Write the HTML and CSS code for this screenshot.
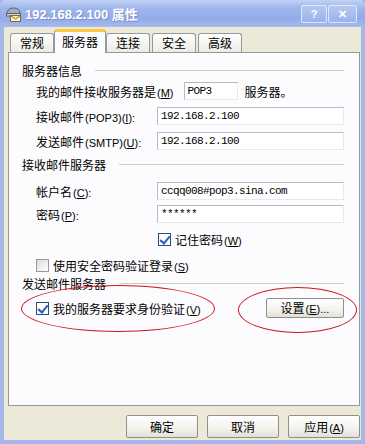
FILE: index.html
```html
<!DOCTYPE html>
<html lang="zh-CN">
<head>
    <meta charset="UTF-8">
    <title>192.168.2.100 属性</title>
    <link rel="stylesheet" href="styles.css">
</head>
<body>
    <div class="window">
        <div class="titlebar">
            <svg class="app-icon" width="17" height="17" viewBox="0 0 17 17">
                <path d="M2 8 Q2 2 8.5 2 Q15 2 15 8 Z" fill="#a7aeb6" stroke="#56616c"/>
                <rect x="1.5" y="7.5" width="14" height="2.5" fill="#d4d9de" stroke="#56616c"/>
                <rect x="5.5" y="9.5" width="10" height="6" fill="#fbf1c0" stroke="#8a6d2e"/>
                <path d="M5.5 9.5 L10.5 13 L15.5 9.5" fill="none" stroke="#8a6d2e"/>
            </svg>
            <span class="title">192.168.2.100 属性</span>
            <div class="caption-buttons">
                <span class="cap-btn">?</span>
                <span class="cap-btn close">✕</span>
            </div>
        </div>

        <div class="client">
            <div class="tabs">
                <span class="tab">常规</span>
                <span class="tab active">服务器</span>
                <span class="tab">连接</span>
                <span class="tab">安全</span>
                <span class="tab">高级</span>
            </div>

            <div class="panel">
                <div class="group-title"><span>服务器信息</span><i></i></div>
                <div class="row row-type">
                    <span>我的邮件接收服务器是<span class="key">(<u>M</u>)</span></span>
                    <span class="field small">POP3</span>
                    <span>服务器。</span>
                </div>
                <div class="row row-input gap7">
                    <span class="label">接收邮件<span class="key">(POP3)(<u>I</u>):</span></span>
                    <span class="field">192.168.2.100</span>
                </div>
                <div class="row row-input gap7">
                    <span class="label">发送邮件<span class="key">(SMTP)(<u>U</u>):</span></span>
                    <span class="field">192.168.2.100</span>
                </div>

                <div class="group-title g2"><span>接收邮件服务器</span><i></i></div>
                <div class="row row-input gap10">
                    <span class="label">帐户名<span class="key">(<u>C</u>):</span></span>
                    <span class="field">ccqq008#pop3.sina.com</span>
                </div>
                <div class="row row-input gap5">
                    <span class="label">密码<span class="key">(<u>P</u>):</span></span>
                    <span class="field">******</span>
                </div>
                <div class="row check-row remember">
                    <span class="check on"></span>
                    <span>记住密码<span class="key">(<u>W</u>)</span></span>
                </div>
                <div class="row check-row spa">
                    <span class="check"></span>
                    <span>使用安全密码验证登录<span class="key">(<u>S</u>)</span></span>
                </div>

                <div class="group-title g3"><span>发送邮件服务器</span><i></i></div>
                <div class="row auth-row">
                    <span class="check on"></span>
                    <span class="auth-text">我的服务器要求身份验证<span class="key">(<u>V</u>)</span></span>
                    <span class="btn settings">设置<span class="key">(<u>E</u>)...</span></span>
                </div>

                <span class="mark mark-left"></span>
                <span class="mark mark-right"></span>
            </div>

            <div class="actions">
                <span class="btn">确定</span>
                <span class="btn">取消</span>
                <span class="btn">应用<span class="key">(<u>A</u>)</span></span>
            </div>
        </div>
    </div>
</body>
</html>
```

FILE: styles.css
```css
body {
    margin: 0;
    font-family: "Noto Sans CJK SC", "Liberation Sans", sans-serif;
    font-size: 12px;
    color: #000;
}
.window {
    width: 365px;
    height: 444px;
    box-sizing: border-box;
    background: #ece9d8;
    border: 4px solid #a3b8e9;
    border-top: none;
    display: flex;
    flex-direction: column;
}
.titlebar {
    height: 27px;
    margin: 0 -4px;
    display: flex;
    align-items: center;
    padding: 0 4px;
    background: linear-gradient(to bottom, #c2d2f5 0%, #9fb6ec 30%, #93abe8 70%, #a6bbee 100%);
    border-radius: 6px 6px 0 0;
}
.app-icon {
    margin: 1px 3px 0 1px;
}
.title {
    color: #fff;
    font-family: "Liberation Sans", "Noto Sans CJK SC", sans-serif;
    font-weight: bold;
    font-size: 13px;
    text-shadow: 1px 1px 0 #7b91c8;
    flex: 1;
}
.caption-buttons {
    display: flex;
    gap: 1px;
    margin-right: 4px;
}
.cap-btn {
    width: 24px;
    height: 16px;
    border: 1px solid #dfe7fa;
    border-radius: 2px;
    background: linear-gradient(#b6c8f1, #9cb3ea);
    color: #fff;
    font-family: "Liberation Sans", sans-serif;
    font-weight: bold;
    font-size: 11px;
    line-height: 16px;
    text-align: center;
}
.cap-btn.close {
    width: 27px;
}
.client {
    flex: 1;
    display: flex;
    flex-direction: column;
    padding: 4px 1px 0 4px;
}
.tabs {
    display: flex;
    align-items: flex-end;
    height: 21px;
    padding-left: 2px;
    gap: 2px;
}
.tab {
    height: 18px;
    line-height: 18px;
    padding: 0 9px;
    border: 1px solid #919b9c;
    border-bottom: none;
    border-radius: 3px 3px 0 0;
    background: linear-gradient(#fefefe, #ecebe5);
}
.tab.active {
    height: 21px;
    line-height: 19px;
    padding: 0 7px;
    margin: 0 -2px -1px;
    border-top: 3px solid #ffc83c;
    background: #fcfcfe;
    position: relative;
    z-index: 1;
}
.panel {
    position: relative;
    height: 354px;
    box-sizing: border-box;
    border: 1px solid #919b9c;
    background: #fcfcfe;
    padding: 9px 15px 0 13px;
}
.group-title {
    display: flex;
    align-items: center;
    height: 16px;
}
.group-title i {
    flex: 1;
    height: 1px;
    margin-left: 13px;
    background: #d0d0bf;
}
.g2 {
    margin-top: 6px;
}
.g3 {
    margin-top: 2px;
}
.row {
    display: flex;
    align-items: center;
    padding-left: 14px;
}
.row-type {
    height: 18px;
    margin-top: 4px;
}
.row-input {
    height: 18px;
}
.gap7 {
    margin-top: 7px;
}
.gap10 {
    margin-top: 10px;
}
.gap5 {
    margin-top: 5px;
}
.label {
    width: 121px;
}
.key {
    font-family: "Liberation Sans", sans-serif;
    font-size: 11px;
    margin-left: 1px;
}
.field {
    flex: 1;
    height: 18px;
    box-sizing: border-box;
    border: 1px solid #b5bcc6;
    border-right-color: #e6e9ee;
    border-bottom-color: #e6e9ee;
    background: #fff;
    padding-left: 3px;
    font-family: "Liberation Mono", monospace;
    font-size: 11px;
    letter-spacing: -0.6px;
    line-height: 16px;
}
.field.small {
    flex: none;
    width: 54px;
    margin: 0 7px 0 10px;
}
.check-row {
    height: 16px;
}
.remember {
    margin-top: 8px;
    padding-left: 136px;
}
.spa {
    margin-top: 10px;
}
.check {
    width: 13px;
    height: 13px;
    box-sizing: border-box;
    border: 1px solid #9a9a9a;
    background: linear-gradient(135deg, #dcdcd6, #fefefe);
    margin-right: 4px;
    position: relative;
}
.check.on {
    border-color: #1c5180;
    background: #fff;
}
.check.on::after {
    content: "";
    position: absolute;
    left: 3px;
    top: 0;
    width: 4px;
    height: 8px;
    border: solid #2a5bb8;
    border-width: 0 2px 2px 0;
    transform: rotate(40deg);
}
.auth-row {
    height: 20px;
    margin-top: 7px;
}
.auth-text {
    flex: 1;
}
.btn {
    height: 23px;
    width: 72px;
    box-sizing: border-box;
    border: 1px solid #8e8f8f;
    border-radius: 2px;
    background: linear-gradient(#ffffff, #f3f2ec 60%, #e2e0d6);
    text-align: center;
    line-height: 21px;
}
.settings {
    width: 78px;
    height: 20px;
    line-height: 18px;
    margin-right: 0;
}
.mark {
    position: absolute;
    border: 1px solid #d0141c;
    border-radius: 50%;
}
.mark-left {
    left: 12px;
    top: 232px;
    width: 192px;
    height: 45px;
}
.mark-right {
    left: 229px;
    top: 234px;
    width: 117px;
    height: 44px;
}
.actions {
    display: flex;
    justify-content: flex-end;
    gap: 9px;
    margin-top: 9px;
}
```
